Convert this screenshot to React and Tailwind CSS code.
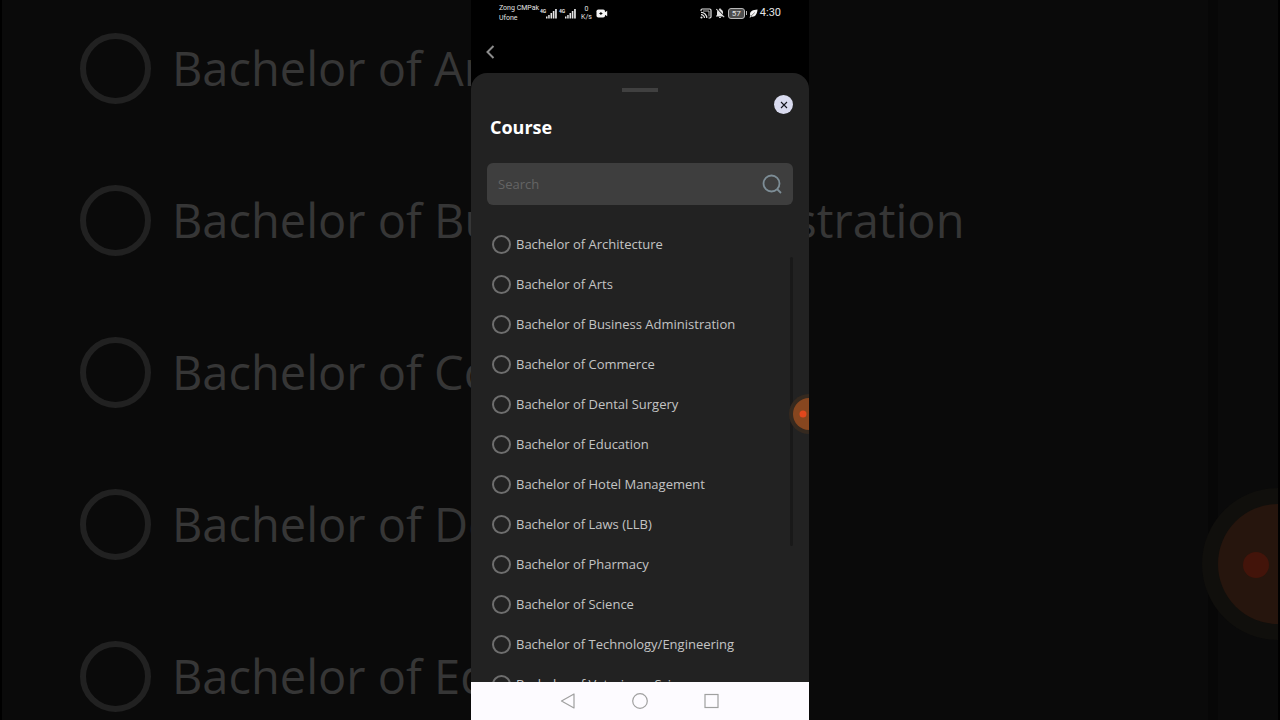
import React, { useState } from 'react';
import { MdNotificationsOff } from 'react-icons/md';
import clsx from 'clsx';

const courses = [
    'Bachelor of Architecture',
    'Bachelor of Arts',
    'Bachelor of Business Administration',
    'Bachelor of Commerce',
    'Bachelor of Dental Surgery',
    'Bachelor of Education',
    'Bachelor of Hotel Management',
    'Bachelor of Laws (LLB)',
    'Bachelor of Pharmacy',
    'Bachelor of Science',
    'Bachelor of Technology/Engineering',
    'Bachelor of Veterinary Science',
];

function Signal() {
    return (
        <div className="flex items-start">
            <span className="w-[6px] text-[5px] leading-[6px] font-bold">4G</span>
            <svg viewBox="0 0 11 11" className="w-[11px] h-[11px]" fill="currentColor">
                <rect x="0" y="8.5" width="1.5" height="2" />
                <rect x="2.2" y="7" width="1.5" height="3.5" />
                <rect x="4.5" y="5" width="1.6" height="5.5" />
                <rect x="6.8" y="3" width="1.6" height="7.5" />
                <rect x="9.1" y="1" width="1.7" height="9.5" />
            </svg>
        </div>
    );
}

function StatusBar() {
    return (
        <header className="flex shrink-0 items-center justify-between h-[26px] px-7 text-[#e4e4e4] font-['Roboto','Liberation_Sans',sans-serif]">
            <div className="flex items-center">
                <p className="w-[41px] text-[7px] leading-[10px] whitespace-nowrap">Zong CMPak<br />Ufone</p>
                <div className="flex gap-[2px]">
                    <Signal />
                    <Signal />
                </div>
                <p className="ml-[5px] text-[7px] leading-[8px] text-center">0<br />K/s</p>
                <svg viewBox="0 0 12 9" className="ml-1 w-3 h-[9px]">
                    <rect x="0.5" y="0.5" width="8.500" height="8" rx="1.8" fill="#f4f4f4" />
                    <path d="M8.500 3.500 11.200 1.800v5.400L8.500 5.500z" fill="#f4f4f4" />
                    <path d="M3.400 4h1v-1h1v1h1v1h-1v1h-1V5h-1z" fill="#000" />
                </svg>
            </div>
            <div className="flex items-center gap-[2px]">
                <svg viewBox="0 0 12 11" className="w-3 h-[11px]" fill="none" stroke="currentColor" strokeWidth="1.2">
                    <path d="M1 3V2.200Q1 1 2.200 1h7.600Q11 1 11 2.200v6.600Q11 10 9.800 10H8.500" />
                    <path d="M1 4.400A5.600 5.600 0 0 1 6.800 10M1 6.600A3.400 3.400 0 0 1 4.500 10" />
                    <path d="M3 3h6v5.500" strokeWidth="0.8" />
                    <circle cx="1.500" cy="9.500" r="0.5" />
                </svg>
                <MdNotificationsOff className="size-3" />
                <div className="flex items-center">
                    <span className="w-[17px] h-[11px] rounded-[3px] border border-[#b8b8b8] bg-[#4c4c4c] text-[8px] leading-[9px] text-center">57</span>
                    <span className="w-px h-1 ml-px bg-[#b8b8b8]"></span>
                </div>
                <svg viewBox="0 0 9 9" className="size-[9px]">
                    <path d="M8.500 0.500C4 0.800 1 2.300 1 5.200c0 .7.200 1.200.500 1.600L.5 8.300l.6.400 1-1.200c3.500 1 6-1.500 6.400-7z" fill="#f4f4f4" />
                    <path d="M2 7.200 5.800 3.500" stroke="#000" strokeWidth="0.500" />
                </svg>
                <time className="text-[11px] leading-[14px]">4:30</time>
            </div>
        </header>
    );
}

// Dimmed, enlarged copy of the list behind the phone
function Backdrop() {
    return (
        <div aria-hidden="true" className="absolute inset-0 overflow-hidden bg-[#0a0a0a] border-x-2 border-black">
            <ul className="-mt-2 pl-[78px]">
                {courses.slice(1, 6).map((course, i) => (
                    <li key={course}>
                        <label className="flex items-center gap-[21px] h-[152px] text-[#363636]">
                            <input type="radio" name="backdrop" disabled className="appearance-none shrink-0 size-[71px] rounded-full border-[6px] border-[#212121]" />
                            <span className="text-[47px] leading-[68px] whitespace-nowrap">{i === 0 ? courses[0] : course}</span>
                        </label>
                    </li>
                ))}
            </ul>
            <span className="absolute right-[60px] inset-y-0 w-[10px] bg-[#070707]"></span>
            <svg viewBox="0 0 80 160" className="absolute right-0 top-[484px] w-20 h-40">
                <circle cx="80" cy="80" r="76" fill="#100f0c" />
                <circle cx="80" cy="80" r="60" fill="#26150d" />
                <circle cx="58" cy="81" r="13" fill="#43140a" />
            </svg>
        </div>
    );
}

function NavBar() {
    return (
        <nav className="flex shrink-0 items-center justify-center gap-14 h-[38px] bg-[#fdfbff] text-[#a0a0a0]">
            <button aria-label="Back">
                <svg viewBox="0 0 16 16" className="size-4" fill="none" stroke="currentColor" strokeWidth="1.2" strokeLinejoin="round">
                    <path d="M1.500 8 14 1v14z" />
                </svg>
            </button>
            <button aria-label="Home">
                <svg viewBox="0 0 16 16" className="size-4" fill="none" stroke="currentColor" strokeWidth="1.2">
                    <circle cx="8" cy="8" r="7.300" />
                </svg>
            </button>
            <button aria-label="Recent apps">
                <svg viewBox="0 0 16 16" className="size-4" fill="none" stroke="currentColor" strokeWidth="1.2">
                    <rect x="1" y="1.500" width="13" height="13" />
                </svg>
            </button>
        </nav>
    );
}

export default function App() {
    const [selected, setSelected] = useState('');
    const [query, setQuery] = useState('');

    const visible = courses.filter((course) => course.toLowerCase().includes(query.toLowerCase()));

    return (
        <div className="relative flex justify-center h-screen overflow-hidden bg-black font-['Open_Sans','Noto_Sans',sans-serif]">
            <Backdrop />

            <main className="relative flex flex-col w-full max-w-[338px] overflow-hidden bg-black">
                <StatusBar />
                <div className="flex shrink-0 items-center h-[47px] pt-1 pl-[14px]">
                    <button aria-label="Go back" className="text-[#8c8c8c]">
                        <svg viewBox="0 0 10 14" className="w-[10px] h-[14px]" fill="none" stroke="currentColor" strokeWidth="2">
                            <path d="M8.500 1 2.500 7l6 6" />
                        </svg>
                    </button>
                </div>

                <section className="relative flex flex-col flex-1 min-h-0 rounded-t-2xl bg-[#222222]">
                    <span className="shrink-0 self-center w-9 h-1 mt-[15px] bg-[#404040]"></span>
                    <div className="flex shrink-0 justify-between pl-[19px] pr-4 pt-[3px]">
                        <h1 className="pt-5 text-[18px] leading-6 font-bold text-white">Course</h1>
                        <button aria-label="Close" className="flex items-center justify-center size-[19px] rounded-full bg-[#d9dbef] text-[#15171f]">
                            <svg viewBox="0 0 8 8" className="size-2" fill="none" stroke="currentColor" strokeWidth="1.1">
                                <path d="M1 1l6 6M7 1 1 7" />
                            </svg>
                        </button>
                    </div>

                    <div className="flex shrink-0 items-center h-[42px] mt-6 mx-4 px-[11px] rounded-md bg-[#3e3e3e]">
                        <input
                            type="text"
                            aria-label="Search"
                            placeholder="Search"
                            value={query}
                            onChange={(e) => setQuery(e.target.value)}
                            className="flex-1 min-w-0 bg-transparent text-[13px] leading-5 text-white placeholder:text-[#646464] outline-none"
                        />
                        <svg viewBox="0 0 20 20" className="size-5 text-[#7d8d96]" fill="none" stroke="currentColor" strokeWidth="1.8">
                            <circle cx="9.500" cy="9.500" r="8" />
                            <path d="M15 15l4 4" />
                        </svg>
                    </div>

                    <ul className="flex-1 min-h-0 mt-[19px] pl-[21px] overflow-hidden">
                        {visible.map((course) => (
                            <li key={course}>
                                <label className="flex items-center gap-[5px] h-10 text-[#c4c4c4]">
                                    <input
                                        type="radio"
                                        name="course"
                                        checked={selected === course}
                                        onChange={() => setSelected(course)}
                                        className={clsx("appearance-none shrink-0 size-[19px] rounded-full border-2 border-[#6e6e6e]", selected === course && "bg-[#c9c9c9]")}
                                    />
                                    <span className="text-[13px] leading-5 whitespace-nowrap">{course}</span>
                                </label>
                            </li>
                        ))}
                    </ul>

                    <span className="absolute right-4 top-[184px] w-[3px] h-[289px] rounded-full bg-[#191919]"></span>
                </section>

                <NavBar />

                {/* Floating screen recorder bubble */}
                <button aria-label="Screen recorder" className="absolute right-0 top-[394px]">
                    <svg viewBox="0 0 20 40" className="w-5 h-10">
                        <circle cx="20" cy="20" r="20" fill="#35291f" />
                        <circle cx="20" cy="20" r="16" fill="#87461f" />
                        <circle cx="14" cy="20" r="3.500" fill="#e2471c" />
                    </svg>
                </button>
            </main>
        </div>
    );
}
